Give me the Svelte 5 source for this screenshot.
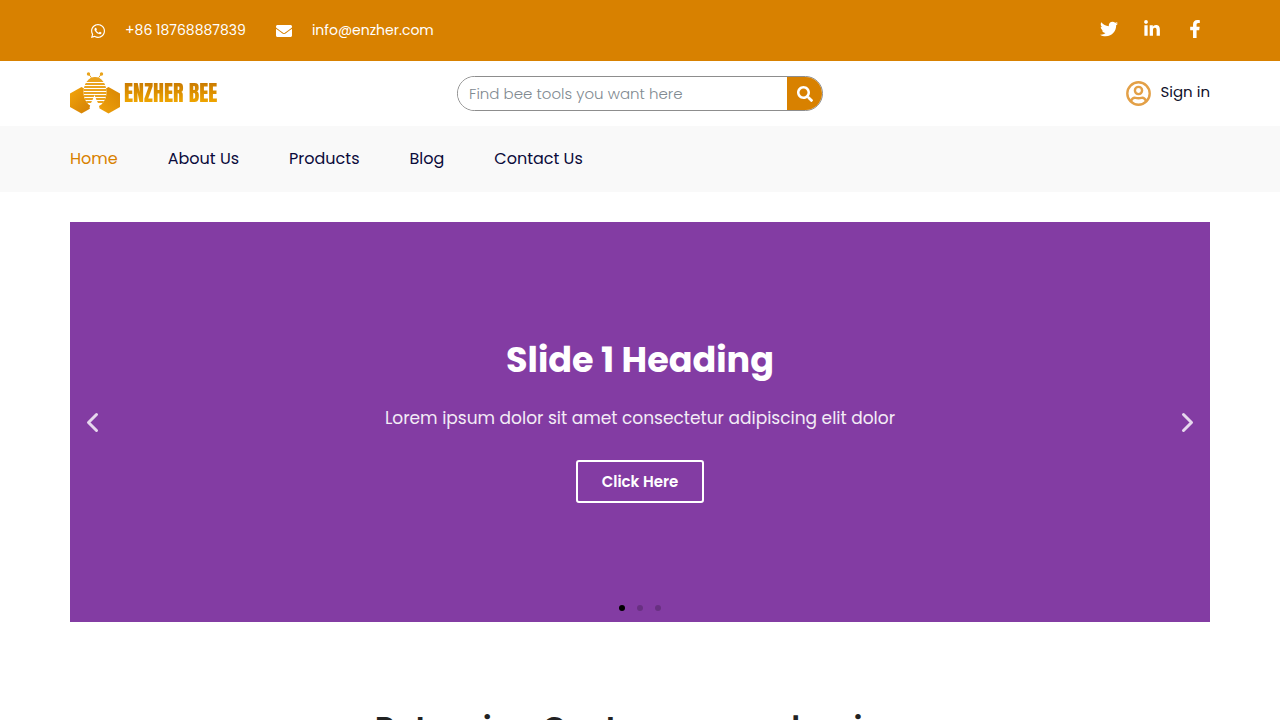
<script>
	const links = ['Home', 'About Us', 'Products', 'Blog', 'Contact Us'];
	const slides = [
		{
			title: 'Slide 1 Heading',
			text: 'Lorem ipsum dolor sit amet consectetur adipiscing elit dolor',
			button: 'Click Here'
		},
		{
			title: 'Slide 2 Heading',
			text: 'Lorem ipsum dolor sit amet consectetur adipiscing elit dolor',
			button: 'Click Here'
		},
		{
			title: 'Slide 3 Heading',
			text: 'Lorem ipsum dolor sit amet consectetur adipiscing elit dolor',
			button: 'Click Here'
		}
	];

	let current = $state(0);
	let search = $state('');

	function move(step) {
		current = (current + step + slides.length) % slides.length;
	}
</script>

<div class="page">
	<div class="topbar">
		<div class="container">
			<div class="contact">
				<a href="tel:+8618768887839">
					<svg width="14" height="16" viewBox="0 0 448 512"><path d="M380.9 97.1C339 55.1 283.2 32 223.9 32c-122.4 0-222 99.6-222 222 0 39.1 10.2 77.3 29.6 111L0 480l117.7-30.9c32.4 17.7 68.9 27 106.1 27h.1c122.3 0 224.1-99.6 224.1-222 0-59.3-25.2-115-67.1-157zm-157 341.6c-33.2 0-65.7-8.9-94-25.7l-6.7-4-69.8 18.3L72 359.2l-4.4-7c-18.5-29.4-28.2-63.3-28.2-98.2 0-101.7 82.8-184.5 184.6-184.5 49.3 0 95.6 19.2 130.4 54.1 34.8 34.9 56.2 81.2 56.1 130.5 0 101.8-84.9 184.6-186.6 184.6zm101.2-138.2c-5.5-2.8-32.8-16.2-37.9-18-5.1-1.9-8.8-2.8-12.5 2.8-3.7 5.6-14.3 18-17.6 21.8-3.2 3.7-6.5 4.2-12 1.4-32.6-16.3-54-29.1-75.5-66-5.7-9.8 5.7-9.1 16.3-30.3 1.8-3.7.9-6.9-.5-9.7-1.4-2.8-12.5-30.1-17.1-41.2-4.5-10.8-9.1-9.3-12.5-9.5-3.2-.2-6.9-.2-10.6-.2-3.7 0-9.7 1.4-14.8 6.9-5.1 5.6-19.4 19-19.4 46.3 0 27.3 19.9 53.7 22.6 57.4 2.8 3.7 39.1 59.7 94.8 83.8 35.2 15.2 49 16.5 66.6 13.9 10.7-1.6 32.8-13.4 37.4-26.4 4.6-13 4.6-24.1 3.2-26.4-1.3-2.5-5-3.9-10.5-6.6z" /></svg>
					<span>+86 18768887839</span>
				</a>
				<a href="mailto:info@enzher.com">
					<svg width="16" height="16" viewBox="0 0 512 512"><path d="M502.3 190.8c3.9-3.1 9.7-.2 9.7 4.7V400c0 26.5-21.5 48-48 48H48c-26.5 0-48-21.5-48-48V195.6c0-5 5.7-7.8 9.7-4.7 22.4 17.4 52.1 39.5 154.1 113.6 21.1 15.4 56.7 47.8 92.2 47.6 35.7.3 72-32.8 92.3-47.6 102-74.1 131.6-96.3 154-113.7zM256 320c23.2.4 56.6-29.2 73.4-41.4 132.7-96.3 142.8-104.7 173.4-128.7 5.8-4.5 9.2-11.5 9.2-18.9v-19c0-26.5-21.5-48-48-48H48c-26.5 0-48 21.5-48 48v19c0 7.4 3.4 14.3 9.2 18.9 30.6 23.9 40.7 32.4 173.4 128.7 16.8 12.2 50.2 41.8 73.4 41.4z" /></svg>
					<span>info@enzher.com</span>
				</a>
			</div>
			<div class="social">
				<a href="#twitter" aria-label="Twitter">
					<svg width="18" height="18" viewBox="0 0 512 512"><path d="M459.37 151.716c.325 4.548.325 9.097.325 13.645 0 138.72-105.583 298.558-298.558 298.558-59.452 0-114.68-17.219-161.137-47.106 8.447.974 16.568 1.299 25.34 1.299 49.055 0 94.213-16.568 130.274-44.832-46.132-.975-84.792-31.188-98.112-72.772 6.498.974 12.995 1.624 19.818 1.624 9.421 0 18.843-1.3 27.614-3.573-48.081-9.747-84.143-51.98-84.143-102.985v-1.299c13.969 7.797 30.214 12.67 47.431 13.319-28.264-18.843-46.781-51.005-46.781-87.391 0-19.492 5.197-37.36 14.294-52.954 51.655 63.675 129.3 105.258 216.365 109.807-1.624-7.797-2.599-15.918-2.599-24.04 0-57.828 46.782-104.934 104.934-104.934 30.213 0 57.502 12.67 76.67 33.137 23.715-4.548 46.456-13.32 66.599-25.34-7.798 24.366-24.366 44.833-46.132 57.827 21.117-2.273 41.584-8.122 60.426-16.243-14.292 20.791-32.161 39.308-52.628 54.253z" /></svg>
				</a>
				<a href="#linkedin" aria-label="LinkedIn">
					<svg width="16" height="18" viewBox="0 0 448 512"><path d="M100.28 448H7.4V148.9h92.88zM53.79 108.1C24.09 108.1 0 83.5 0 53.8a53.79 53.79 0 0 1 107.58 0c0 29.7-24.1 54.3-53.79 54.3zM447.9 448h-92.68V302.4c0-34.7-.7-79.2-48.29-79.2-48.29 0-55.69 37.7-55.69 76.7V448h-92.78V148.9h89.08v40.8h1.3c12.4-23.5 42.69-48.3 87.88-48.3 94 0 111.28 61.9 111.28 142.3V448z" /></svg>
				</a>
				<a href="#facebook" aria-label="Facebook">
					<svg width="12" height="18" viewBox="0 0 320 512"><path d="M279.14 288l14.22-92.66h-88.91v-60.13c0-25.35 12.42-50.06 52.24-50.06h40.42V6.26S260.43 0 225.36 0c-73.22 0-121.08 44.38-121.08 124.72v70.62H22.89V288h81.39v224h100.17V288z" /></svg>
				</a>
			</div>
		</div>
	</div>

	<header>
		<div class="container">
			<a class="logo" href="#home">
				<svg width="50" height="42" viewBox="0 0 50 42">
					<defs>
						<linearGradient id="honey" x1="0" y1="0" x2="1" y2="1">
							<stop offset="0" stop-color="#f4a60a" />
							<stop offset="1" stop-color="#d07c04" />
						</linearGradient>
						<linearGradient id="honey2" x1="1" y1="0" x2="0" y2="1">
							<stop offset="0" stop-color="#d88604" />
							<stop offset="1" stop-color="#f0a30c" />
						</linearGradient>
						<clipPath id="body"><ellipse cx="25" cy="20" rx="11.5" ry="15" /></clipPath>
					</defs>
					<path d="M11.5 15L23 21.5V35L11.5 41.500L0 35V21.500z" fill="url(#honey)" />
					<path d="M38.500 15L50 21.500V35L38.500 41.500L27 35V21.500z" fill="url(#honey2)" />
					<path d="M18.500 2L22.500 7M31.500 2L27.500 7" stroke="#e9a31b" fill="none" />
					<circle cx="18.500" cy="2" r="1.700" fill="#e9a31b" />
					<circle cx="31.500" cy="2" r="1.700" fill="#e9a31b" />
					<ellipse cx="25" cy="20" rx="11.500" ry="15" fill="#fff" />
					<g clip-path="url(#body)" fill="#eaa31d">
						<path d="M12 4h26v6H12zM12 11h26v2H12zM12 14h26v2H12zM12 17h26v2H12zM12 20h26v2H12zM12 23h26v2H12zM12 26h26v2H12zM12 29h26v2H12z" />
					</g>
					<path d="M24.500 23l2 5 2 4 1 4-3 6h-3l-4-6 1-4 2-4z" fill="#fff" />
				</svg>
				<span>ENZHER BEE</span>
			</a>
			<form class="search" onsubmit={(e) => e.preventDefault()}>
				<input type="search" aria-label="Search" placeholder="Find bee tools you want here" bind:value={search} />
				<button aria-label="Search">
					<svg width="16" height="16" viewBox="0 0 512 512"><path d="M505 442.7L405.3 343c-4.5-4.5-10.6-7-17-7H372c27.6-35.3 44-79.7 44-128C416 93.1 322.9 0 208 0S0 93.1 0 208s93.1 208 208 208c48.3 0 92.7-16.4 128-44v16.3c0 6.4 2.5 12.5 7 17l99.7 99.7c9.4 9.4 24.6 9.4 33.9 0l28.3-28.3c9.4-9.4 9.4-24.6.1-34zM208 336c-70.7 0-128-57.2-128-128 0-70.7 57.2-128 128-128 70.7 0 128 57.2 128 128 0 70.7-57.2 128-128 128z" /></svg>
				</button>
			</form>
			<a class="signin" href="#signin">
				<svg width="25" height="25" viewBox="0 0 25 25" fill="none" stroke="#e3a047" stroke-width="2.4">
					<circle cx="12.5" cy="12.5" r="11.2" />
					<circle cx="12.5" cy="9.5" r="3.6" />
					<path d="M5 20.5c.5-3 2.500-4 4.500-3.600q3 .6 6 0c2-.4 4 .6 4.500 3.600" />
				</svg>
				<span>Sign in</span>
			</a>
		</div>
	</header>

	<nav>
		<div class="container">
			{#each links as link, i}
				<a class:active={i === 0} href="#{link}">{link}</a>
			{/each}
		</div>
	</nav>

	<main class="container">
		<section class="slider">
			<button class="arrow" aria-label="Previous slide" onclick={() => move(-1)}>
				<svg width="25" height="25" viewBox="0 0 25 25"><path d="M16.5 4.500L8.500 12.500L16.500 20.500" /></svg>
			</button>
			<div class="slide">
				<h2>{slides[current].title}</h2>
				<p>{slides[current].text}</p>
				<a class="cta" href="#products">{slides[current].button}</a>
			</div>
			<button class="arrow" aria-label="Next slide" onclick={() => move(1)}>
				<svg width="25" height="25" viewBox="0 0 25 25"><path d="M8.500 4.500L16.500 12.500L8.500 20.500" /></svg>
			</button>
			<div class="dots">
				{#each slides as slide, i}
					<button class:on={i === current} aria-label={slide.title} onclick={() => (current = i)}></button>
				{/each}
			</div>
		</section>
		<h2 class="heading">Returning Customers are buying</h2>
	</main>
</div>

<style>
	:global(body) {
		margin: 0;
	}
	* {
		box-sizing: border-box;
	}
	.page {
		height: 100vh;
		overflow: hidden auto;
		scrollbar-width: none;
		font-family: Poppins, Inter, sans-serif;
		background: #fff;
	}
	a {
		color: inherit;
		text-decoration: none;
	}
	button {
		padding: 0;
		border: 0;
		font: inherit;
		cursor: pointer;
	}
	svg {
		display: block;
		flex-shrink: 0;
	}
	.container {
		display: flex;
		align-items: center;
		justify-content: space-between;
		max-width: 1140px;
		margin: 0 auto;
	}
	.topbar {
		background: #d88100;
		color: #fff;
		fill: #fff;
		font-size: 14px;
	}
	.topbar .container {
		height: 61px;
		padding: 0 6px 0 21px;
	}
	.contact,
	.contact a {
		display: flex;
		align-items: center;
	}
	.contact {
		gap: 30px;
	}
	.contact a {
		gap: 20px;
	}
	.social {
		display: flex;
		gap: 25px;
		padding-bottom: 3px;
	}
	.social a {
		display: flex;
		justify-content: center;
		width: 18px;
	}
	header .container {
		height: 65px;
	}
	.logo {
		display: flex;
		align-items: center;
		flex: 1;
		gap: 4px;
		padding-bottom: 2px;
	}
	.logo span {
		font: 400 22px/1 Anton, Impact, 'Roboto Condensed', Inter, sans-serif;
		color: transparent;
		background: linear-gradient(#c97900, #f2a900);
		background-clip: text;
		white-space: nowrap;
	}
	.search {
		display: flex;
		width: 366px;
		height: 35px;
		border: 1px solid #8d8d8d;
		border-radius: 18px;
		overflow: hidden;
	}
	.search input {
		flex: 1;
		min-width: 0;
		padding: 0 11px;
		border: 0;
		outline: 0;
		background: #fff;
		font: 300 15px Poppins, Inter, sans-serif;
	}
	.search input::placeholder {
		color: #818a91;
	}
	.search button {
		display: grid;
		place-items: center;
		width: 35px;
		background: #d88100;
		fill: #fff;
	}
	.signin {
		display: flex;
		flex: 1;
		justify-content: flex-end;
		align-items: center;
		gap: 9px;
		font-size: 15px;
		color: #10102a;
	}
	.signin span {
		padding-bottom: 4px;
	}
	nav {
		background: #f9f9f9;
		color: #0b0b3b;
		font-size: 16px;
	}
	nav .container {
		justify-content: flex-start;
		gap: 50px;
		height: 66px;
		padding-bottom: 2px;
	}
	nav .active {
		color: #d88100;
	}
	main.container {
		display: block;
		padding-top: 30px;
	}
	.slider {
		position: relative;
		display: flex;
		align-items: center;
		justify-content: space-between;
		min-height: 400px;
		padding: 0 10px;
		background: #833ca3;
		color: #fff;
	}
	.slide {
		text-align: center;
	}
	.slide h2 {
		margin: 0 0 30px;
		font-size: 35px;
		line-height: 35px;
		font-weight: 700;
	}
	.slide p {
		margin: 0 0 30px;
		font-size: 17px;
		line-height: 23px;
		color: #f3ecf6;
	}
	.cta {
		display: inline-block;
		padding: 12px 24px;
		border: 2px solid #fff;
		border-radius: 3px;
		font-size: 15px;
		line-height: 15px;
		font-weight: 600;
	}
	.arrow {
		background: none;
	}
	.arrow path {
		fill: none;
		stroke: #e6d8ed;
		stroke-width: 3;
		stroke-linecap: round;
		stroke-linejoin: round;
	}
	.dots {
		position: absolute;
		right: 0;
		bottom: 11px;
		left: 0;
		display: flex;
		justify-content: center;
		gap: 12px;
	}
	.dots button {
		width: 6px;
		height: 6px;
		border-radius: 50%;
		background: #000;
		opacity: 0.2;
	}
	.dots .on {
		opacity: 1;
	}
	.heading {
		margin: 85px 0 40px;
		text-align: center;
		font-size: 32px;
		line-height: 42px;
		font-weight: 600;
		color: #222;
	}
</style>
